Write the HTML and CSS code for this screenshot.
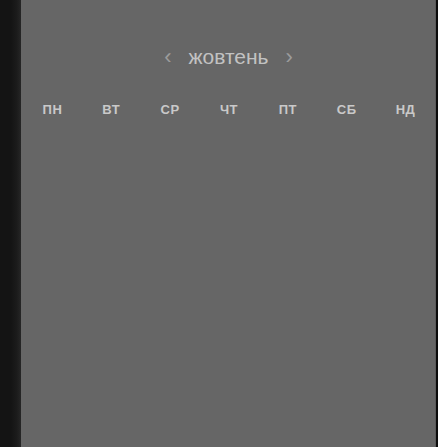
FILE: index.html
```html
<!DOCTYPE html>
<html lang="uk">
<head>
<meta charset="utf-8">
<link rel="stylesheet" href="styles.css">
</head>
<body>
<div class="screen">
  <div class="side"></div>
  <main class="panel">
    <div class="month-bar">
      <span class="arrow">‹</span>
      <span class="month">жовтень</span>
      <span class="arrow">›</span>
    </div>
    <div class="weekdays">
      <span>пн</span><span>вт</span><span>ср</span><span>чт</span><span>пт</span><span>сб</span><span>нд</span>
    </div>
  </main>
  <div class="edge"></div>
</div>
</body>
</html>
```
FILE: styles.css
```css
html, body {
  margin: 0;
  padding: 0;
  height: 100%;
  background: #131313;
}
.screen {
  display: flex;
  height: 447px;
  font-family: "Liberation Sans", Arial, sans-serif;
}
.side {
  width: 21px;
  flex: none;
  background: linear-gradient(to right, #141414 0, #141414 11px, #1c1c1c 17px, #262626 21px);
}
.panel {
  width: 414px;
  flex: none;
  background: #666666;
  display: flex;
  flex-direction: column;
}
.edge {
  flex: 1;
  background: #0c0c0c;
  border-left: 1px solid #5a5a5a;
}
.month-bar {
  display: flex;
  justify-content: center;
  align-items: center;
  gap: 17px;
  margin-top: 44px;
  height: 26px;
  margin-left: 1px;
}
.month {
  font-size: 21px;
  color: #c2c2c2;
}
.arrow {
  font-size: 22px;
  color: #9c9c9c;
  line-height: 1;
}
.weekdays {
  display: grid;
  grid-template-columns: repeat(7, 1fr);
  margin-top: 32px;
  margin-left: 2px;
}
.weekdays span {
  text-align: center;
  text-transform: uppercase;
  font-weight: bold;
  font-size: 13px;
  color: #c9c9c9;
  letter-spacing: 0.5px;
}
```
